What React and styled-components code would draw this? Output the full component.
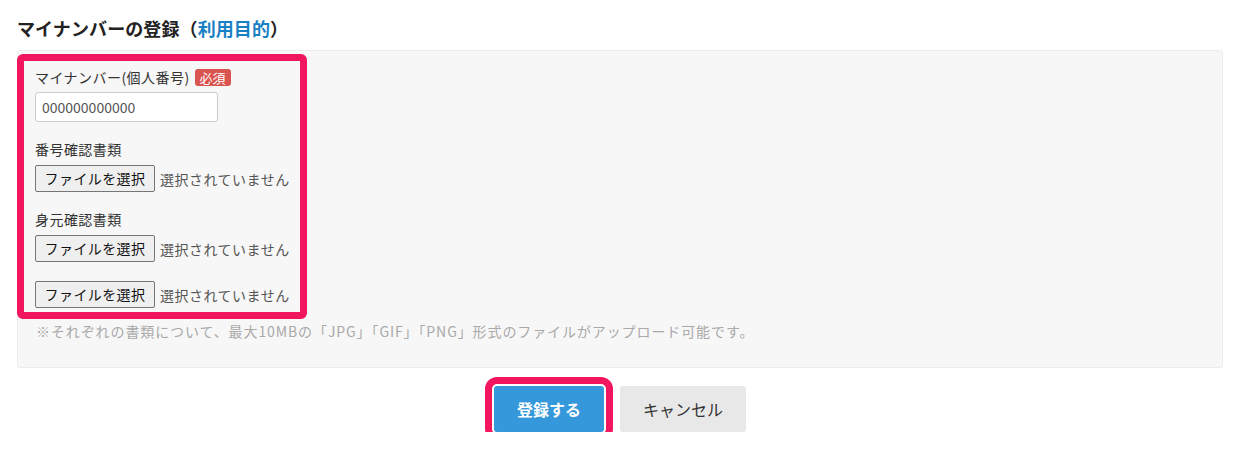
import React from "react";
import styled, { createGlobalStyle } from "styled-components";

const Global = createGlobalStyle`
  html, body { margin: 0; padding: 0; background: #fff; }
  body { font-family: "Noto Sans CJK JP", "Noto Sans", sans-serif; color: #333; }
  * { box-sizing: border-box; }
`;

const Page = styled.div`
  padding: 16px 18px 0 17px;
`;

const Title = styled.h2`
  margin: 0 0 10px;
  font-size: 18px;
  line-height: 24px;
  font-weight: 700;
  color: #222;
  letter-spacing: 0.1px;
`;

const TitleLink = styled.a`
  color: #1a80c4;
  text-decoration: none;
`;

const Panel = styled.div`
  background: #f7f7f7;
  border: 1px solid #ececec;
  border-radius: 3px;
  padding: 3px 0 26px;
`;

const Highlight = styled.div`
  width: 290px;
  margin-left: -1px;
  border: 7px solid #f2165e;
  border-radius: 6px;
  padding: 6px 0 4px 11px;
`;

const Field = styled.div`
  display: flex;
  flex-direction: column;
  align-items: flex-start;
  gap: ${(p) => p.$gap || 6}px;
  margin-top: ${(p) => p.$top || 0}px;
`;

const Label = styled.div`
  display: flex;
  align-items: center;
  gap: 5px;
  font-size: 14px;
  line-height: 20px;
  color: #333;
  letter-spacing: 0.45px;
`;

const Badge = styled.span`
  display: inline-block;
  background: #d9534f;
  color: #fff;
  font-size: 13px;
  line-height: 17px;
  padding: 0 5px;
  border-radius: 3px;
  letter-spacing: 0;
`;

const TextInput = styled.input`
  width: 183px;
  height: 30px;
  border: 1px solid #cccccc;
  border-radius: 3px;
  background: #fff;
  padding: 0 6px;
  font-family: inherit;
  font-size: 14px;
  color: #555;
  outline: none;
`;

const FileRow = styled.div`
  display: flex;
  align-items: center;
  gap: 5px;
`;

const FileButton = styled.button`
  height: 27px;
  width: 120px;
  padding: 0;
  border: 1px solid #767676;
  border-radius: 2px;
  background: #efefef;
  font-family: inherit;
  font-size: 14px;
  line-height: 25px;
  color: #111;
  letter-spacing: 0.4px;
`;

const FileStatus = styled.span`
  font-size: 14px;
  line-height: 20px;
  color: #555;
  letter-spacing: 0.5px;
`;

const Note = styled.p`
  margin: 2px 0 0 18px;
  font-size: 14px;
  line-height: 20px;
  color: #a9a9a9;
  letter-spacing: 0.9px;
`;

const Actions = styled.div`
  display: flex;
  justify-content: center;
  gap: 16px;
  margin-top: 18px;
`;

const Button = styled.button`
  height: 46px;
  width: ${(p) => p.$w}px;
  border: none;
  border-radius: 3px;
  font-family: inherit;
  font-size: 16px;
  font-weight: ${(p) => (p.$primary ? 700 : 400)};
  background: ${(p) => (p.$primary ? "#3498db" : "#e8e8e8")};
  color: ${(p) => (p.$primary ? "#fff" : "#333")};
  outline: ${(p) => (p.$marked ? "7px solid #f2165e" : "none")};
  outline-offset: 2px;
`;

function FileInput() {
  return (
    <FileRow>
      <FileButton type="button">ファイルを選択</FileButton>
      <FileStatus>選択されていません</FileStatus>
    </FileRow>
  );
}

export default function App() {
  return (
    <>
      <Global />
      <Page>
        <Title>
          マイナンバーの登録（<TitleLink href="#">利用目的</TitleLink>）
        </Title>
        <Panel>
          <Highlight>
            <Field $gap={5}>
              <Label>
                マイナンバー(個人番号)<Badge>必須</Badge>
              </Label>
              <TextInput defaultValue="000000000000" />
            </Field>
            <Field $top={17}>
              <Label>番号確認書類</Label>
              <FileInput />
            </Field>
            <Field $top={17}>
              <Label>身元確認書類</Label>
              <FileInput />
            </Field>
            <Field $top={19}>
              <FileInput />
            </Field>
          </Highlight>
          <Note>
            ※それぞれの書類について、最大10MBの「JPG」「GIF」「PNG」形式のファイルがアップロード可能です。
          </Note>
        </Panel>
        <Actions>
          <Button $primary $marked $w={110}>登録する</Button>
          <Button $w={126}>キャンセル</Button>
        </Actions>
      </Page>
    </>
  );
}
